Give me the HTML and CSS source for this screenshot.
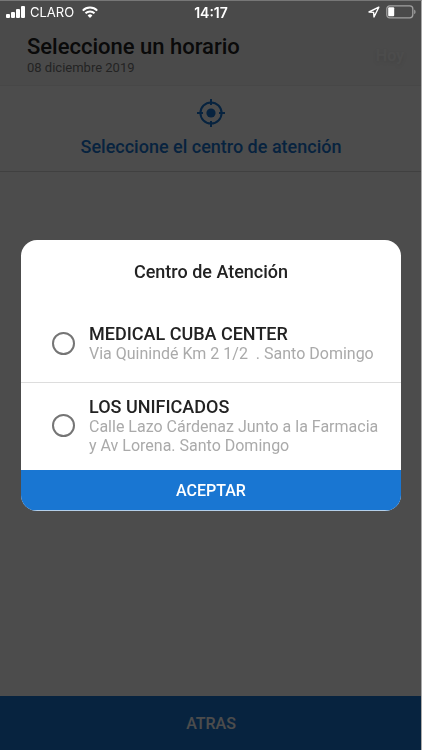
FILE: index.html
```html
<!DOCTYPE html>
<html lang="es">
<head>
    <meta charset="UTF-8">
    <meta name="viewport" content="width=device-width, initial-scale=1.0">
    <title>Seleccione un horario</title>
    <link rel="stylesheet" href="styles.css">
</head>
<body>
    <!-- Barra de estado -->
    <div class="status-bar">
        <div class="status-left">
            <svg class="signal-icon" width="20" height="12" viewBox="0 0 20 12" fill="#fff">
                <rect x="0" y="8" width="4" height="4" rx="1"/>
                <rect x="5" y="6" width="4" height="6" rx="1"/>
                <rect x="10" y="3" width="4" height="9" rx="1"/>
                <rect x="15" y="0" width="4" height="12" rx="1"/>
            </svg>
            <span>CLARO</span>
            <svg class="wifi-icon" width="16" height="12" viewBox="0 0 16 12" fill="none" stroke="#fff" stroke-width="2">
                <path d="M0.8 4.6a10.2 10.2 0 0 1 14.4 0"/>
                <path d="M3.5 7.3a6.4 6.4 0 0 1 9 0"/>
                <path d="M8 12L5.6 9.5a3.4 3.4 0 0 1 4.8 0z" fill="#fff" stroke="none"/>
            </svg>
        </div>
        <span class="status-time">14:17</span>
        <div class="status-right">
            <svg width="12" height="12" viewBox="0 0 12 12" fill="none" stroke="#fff" stroke-width="1.4" stroke-linejoin="round">
                <path d="M10.8 1.2L1 6l4.6.4L6 11z"/>
            </svg>
            <svg width="30" height="14" viewBox="0 0 30 14">
                <rect x="0.8" y="0.8" width="26" height="12" rx="3" fill="none" stroke="#a0a0a0" stroke-width="1.3"/>
                <rect x="2.2" y="2.3" width="6" height="9" rx="1" fill="#fff"/>
                <path d="M28.2 4.6a2.6 2.6 0 0 1 0 4.6z" fill="#a0a0a0"/>
            </svg>
        </div>
    </div>

    <div class="page">
        <header class="header">
            <div>
                <h1>Seleccione un horario</h1>
                <p class="header-date">08 diciembre 2019</p>
            </div>
            <button class="today-button" type="button">Hoy</button>
        </header>

        <button class="center-select" type="button">
            <svg width="28" height="28" viewBox="0 0 28 28" fill="none" stroke="#1976d2" stroke-width="2">
                <circle cx="14" cy="14" r="10.6"/>
                <path d="M14 0v6M14 22v6M0 14h6M22 14h6"/>
                <circle cx="14" cy="14" r="4.6" fill="#1976d2" stroke="none"/>
            </svg>
            <span>Seleccione el centro de atención</span>
        </button>

        <main class="content"></main>

        <button class="back-button" type="button">ATRAS</button>
    </div>

    <!-- Selector de centro -->
    <div class="overlay">
        <form class="dialog" role="dialog" aria-labelledby="dialogTitle">
            <h2 id="dialogTitle">Centro de Atención</h2>
            <label class="option">
                <input type="radio" name="centro" value="1">
                <span class="option-text">
                    <span class="option-name">MEDICAL CUBA CENTER</span>
                    <span class="option-address">Via Quinindé Km 2 1/2&nbsp; . Santo Domingo</span>
                </span>
            </label>
            <label class="option">
                <input type="radio" name="centro" value="2">
                <span class="option-text">
                    <span class="option-name">LOS UNIFICADOS</span>
                    <span class="option-address">Calle Lazo Cárdenaz Junto a la Farmacia y Av Lorena. Santo Domingo</span>
                </span>
            </label>
            <button class="accept-button" type="button">ACEPTAR</button>
        </form>
    </div>
</body>
</html>
```

FILE: styles.css
```css
* {
    margin: 0;
    padding: 0;
    box-sizing: border-box;
}

body {
    font-family: Roboto, "Liberation Sans", sans-serif;
    background: #fff;
    color: #222;
}

button {
    border: none;
    font-family: inherit;
    cursor: pointer;
}

.status-bar {
    position: fixed;
    top: 0;
    left: 0;
    right: 0;
    z-index: 20;
    height: 24px;
    padding: 0 6px;
    display: grid;
    grid-template-columns: 1fr auto 1fr;
    align-items: center;
    color: #fff;
    font-family: Inter, "Liberation Sans", sans-serif;
    font-size: 13px;
}

.status-left,
.status-right {
    display: flex;
    align-items: center;
    gap: 4px;
}

.status-right {
    justify-content: flex-end;
    gap: 6px;
}

.wifi-icon {
    margin-left: 4px;
}

.status-time {
    font-size: 14px;
    font-weight: 600;
}

.page {
    min-height: 100vh;
    display: flex;
    flex-direction: column;
}

.header {
    display: flex;
    align-items: center;
    justify-content: space-between;
    padding: 34px 18px 9px 27px;
    background: #f7f7f7;
    border-bottom: 1px solid #eee;
}

.header h1 {
    font-size: 22px;
    font-weight: 500;
    line-height: 26px;
}

.header-date {
    font-size: 13px;
    line-height: 16px;
    color: #777;
}

.today-button {
    background: none;
    color: #fff;
    font-size: 16px;
    font-weight: 500;
    text-shadow: 0 2px 4px rgba(0, 0, 0, 0.1);
}

.center-select {
    display: flex;
    flex-direction: column;
    align-items: center;
    gap: 8px;
    padding: 13px 16px 12px;
    background: none;
    border-bottom: 1px solid #d8d8d8;
    color: #1976d2;
    font-size: 18px;
    font-weight: 500;
    line-height: 24px;
}

.content {
    flex: 1;
}

.back-button {
    height: 54px;
    background: #1976d2;
    color: #fff;
    font-size: 16px;
    font-weight: 500;
}

.overlay {
    position: fixed;
    inset: 0;
    z-index: 10;
    display: flex;
    align-items: center;
    justify-content: center;
    padding: 0 20px 0 21px;
    background: rgba(0, 0, 0, 0.7);
    border-top: 1px solid #777;
    border-right: 1px solid #aaa;
}

.dialog {
    width: 100%;
    max-width: 480px;
    background: #fff;
    border-radius: 16px;
    overflow: hidden;
}

.dialog h2 {
    padding: 20px 16px 31px;
    font-size: 18px;
    font-weight: 500;
    line-height: 24px;
    text-align: center;
}

.option {
    display: flex;
    align-items: center;
    gap: 14px;
    padding: 8px 20px 19px 31px;
    cursor: pointer;
}

.option + .option {
    padding-top: 13px;
    padding-bottom: 15px;
    border-top: 1px solid #ddd;
}

.option input {
    appearance: none;
    flex: none;
    width: 23px;
    height: 23px;
    border: 2px solid #757575;
    border-radius: 50%;
}

.option input:checked {
    border: 7px solid #1976d2;
}

.option-text {
    display: flex;
    flex-direction: column;
}

.option-name {
    font-size: 18px;
    font-weight: 500;
    line-height: 21px;
}

.option-address {
    font-size: 16px;
    line-height: 19px;
    color: #aaa;
}

.accept-button {
    display: block;
    width: 100%;
    height: 41px;
    background: #1976d2;
    color: #fff;
    font-size: 16px;
    font-weight: 500;
    border-bottom: 1px solid #b4cfe9;
}
```
